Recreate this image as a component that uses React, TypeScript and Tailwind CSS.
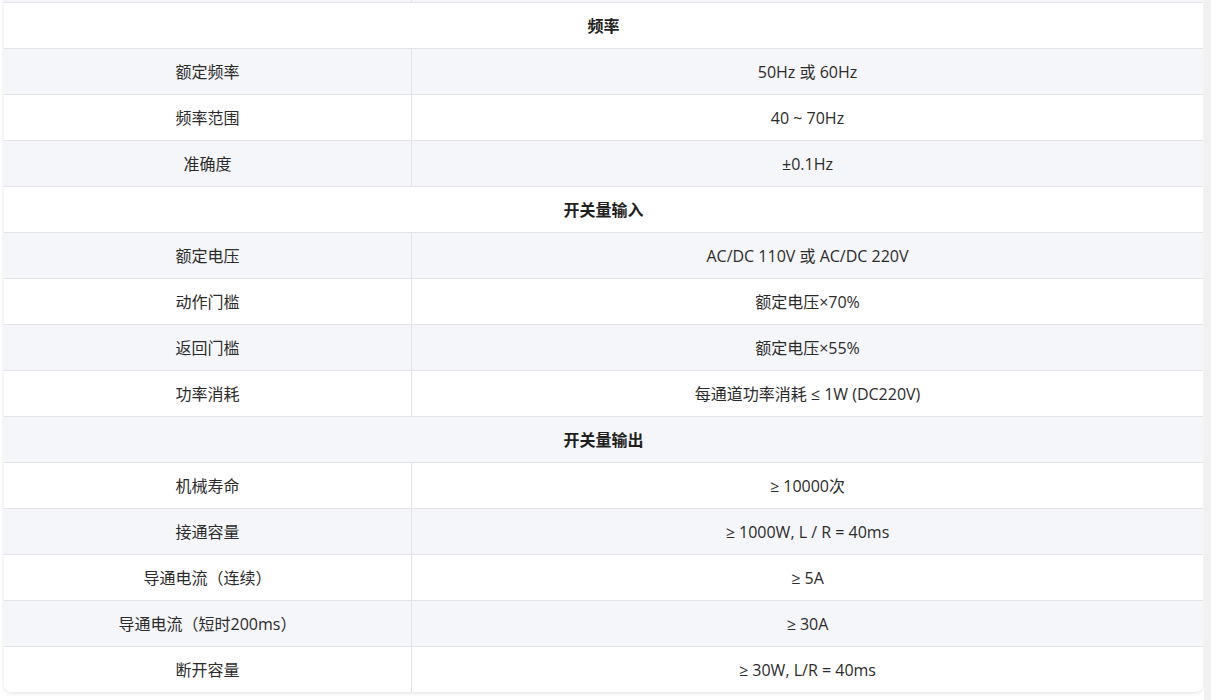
type Row = { label: string; value?: string; section?: boolean };

const rows: Row[] = [
  { label: "", value: "" },
  { label: "频率", section: true },
  { label: "额定频率", value: "50Hz 或 60Hz" },
  { label: "频率范围", value: "40 ~ 70Hz" },
  { label: "准确度", value: "±0.1Hz" },
  { label: "开关量输入", section: true },
  { label: "额定电压", value: "AC/DC 110V 或 AC/DC 220V" },
  { label: "动作门槛", value: "额定电压×70%" },
  { label: "返回门槛", value: "额定电压×55%" },
  { label: "功率消耗", value: "每通道功率消耗 ≤ 1W (DC220V)" },
  { label: "开关量输出", section: true },
  { label: "机械寿命", value: "≥ 10000次" },
  { label: "接通容量", value: "≥ 1000W, L / R = 40ms" },
  { label: "导通电流（连续）", value: "≥ 5A" },
  { label: "导通电流（短时200ms）", value: "≥ 30A" },
  { label: "断开容量", value: "≥ 30W, L/R = 40ms" },
];

export default function App() {
  return (
    <div
      className="flex h-[700px] overflow-hidden bg-white text-[16px] text-[#2b2b2b]"
      style={{ fontFamily: '"Open Sans", "Noto Sans CJK SC", sans-serif' }}
    >
      <div className="flex-1 pl-1 pr-px">
        <div className="-mt-[43px] overflow-hidden rounded-b-lg bg-white shadow-[0_1px_4px_rgba(0,0,0,0.12)]">
          {rows.map((r, i) => (
            <div
              key={i}
              className={
                "flex h-[46px] border-[#e3e3e6] last:h-[45px] [&:not(:last-child)]:border-b " +
                (i % 2 === 0 ? "bg-[#f5f6f9]" : "bg-white")
              }
            >
              {r.section ? (
                <div className="flex flex-1 items-center justify-center font-bold text-[#1f1f1f]">
                  {r.label}
                </div>
              ) : (
                <>
                  <div className="flex w-[407px] items-center justify-center">{r.label}</div>
                  <div className="flex flex-1 items-center justify-center border-l border-[#e3e3e6]">
                    {r.value}
                  </div>
                </>
              )}
            </div>
          ))}
        </div>
      </div>
      <div className="w-[7px] bg-[#f1f1f1]" />
    </div>
  );
}
